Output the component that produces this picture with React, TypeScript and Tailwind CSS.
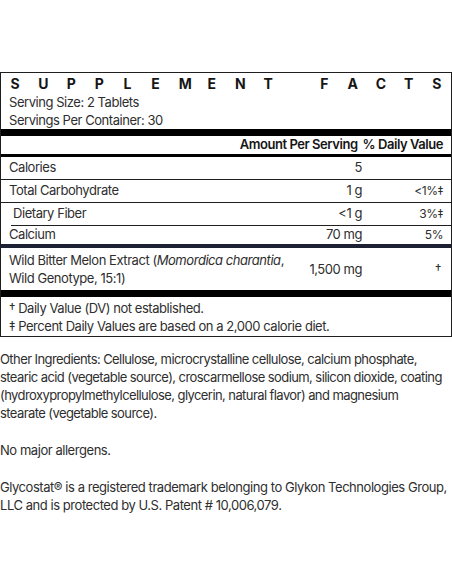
const title = "SUPPLEMENT FACTS".split("")

type Row = { name: React.ReactNode; amount: string; dv: string; indent?: boolean; last?: boolean }

const rows: Row[] = [
  { name: "Calories", amount: "5", dv: "" },
  { name: "Total Carbohydrate", amount: "1 g", dv: "<1%‡" },
  { name: "Dietary Fiber", amount: "<1 g", dv: "3%‡", indent: true },
  { name: "Calcium", amount: "70 mg", dv: "5%", last: true },
]

export default function App() {
  return (
    <div className="min-h-[584px] w-[452px] bg-white pt-[72px] font-['Inter',sans-serif] text-[13px] tracking-[-0.45px] text-[#2e2e2e]">
      <div className="border border-[#1f1f1f]">
        <div className="flex h-[20px] items-center justify-between px-[9px] text-[14px] font-bold tracking-normal text-[#161616]">
          {title.map((c, i) => (
            <span key={i} className="w-[10px] text-center">{c === " " ? "\u00a0" : c}</span>
          ))}
        </div>
        <div className="px-2 leading-[18px]">Serving Size: 2 Tablets</div>
        <div className="px-2 leading-[18px]">Servings Per Container: 30</div>
        <div className="h-[7px] bg-black" />
        <div className="flex h-[18px] items-center justify-end gap-[5px] whitespace-nowrap px-2 font-semibold text-[#161616]">
          <span>Amount Per Serving</span>
          <span>% Daily Value</span>
        </div>
        <div className="h-[3px] bg-black" />
        {rows.map((r, i) => (
          <div
            key={i}
            className={
              "flex items-center pr-2 " +
              (r.indent ? "ml-[10px] pl-[2px] " : "pl-2 ") +
              (r.last ? "h-[22px] border-b-[4px] border-[#1c2233]" : "h-[23px] border-b border-[#1f1f1f]")
            }
          >
            <span className="flex-1">{r.name}</span>
            <span className="w-[72px] text-right">{r.amount}</span>
            <span className="w-[81px] text-right text-[12px]">{r.dv}</span>
          </div>
        ))}
        <div className="flex items-center py-[3px] pl-2 pr-2 leading-[18px]">
          <span className="flex-1">
            Wild Bitter Melon Extract (<i>Momordica charantia</i>,<br />Wild Genotype, 15:1)
          </span>
          <span className="w-[72px] whitespace-nowrap text-right">1,500 mg</span>
          <span className="w-[81px] pr-[2px] text-right">†</span>
        </div>
        <div className="h-[7px] bg-black" />
        <div className="px-2 pb-[1px] pt-[2px] leading-[18px]">
          <div>† Daily Value (DV) not established.</div>
          <div>‡ Percent Daily Values are based on a 2,000 calorie diet.</div>
        </div>
      </div>

      <div className="mt-[13px] space-y-[19px] leading-[18px]">
        <p className="tracking-[-0.58px]">
          Other Ingredients: Cellulose, microcrystalline cellulose, calcium phosphate,
          <br />
          stearic acid (vegetable source), croscarmellose sodium, silicon dioxide, coating
          <br />
          (hydroxypropylmethylcellulose, glycerin, natural flavor) and magnesium
          <br />
          stearate (vegetable source).
        </p>
        <p>No major allergens.</p>
        <p>
          Glycostat® is a registered trademark belonging to Glykon Technologies Group,
          <br />
          LLC and is protected by U.S. Patent # 10,006,079.
        </p>
      </div>
    </div>
  )
}
